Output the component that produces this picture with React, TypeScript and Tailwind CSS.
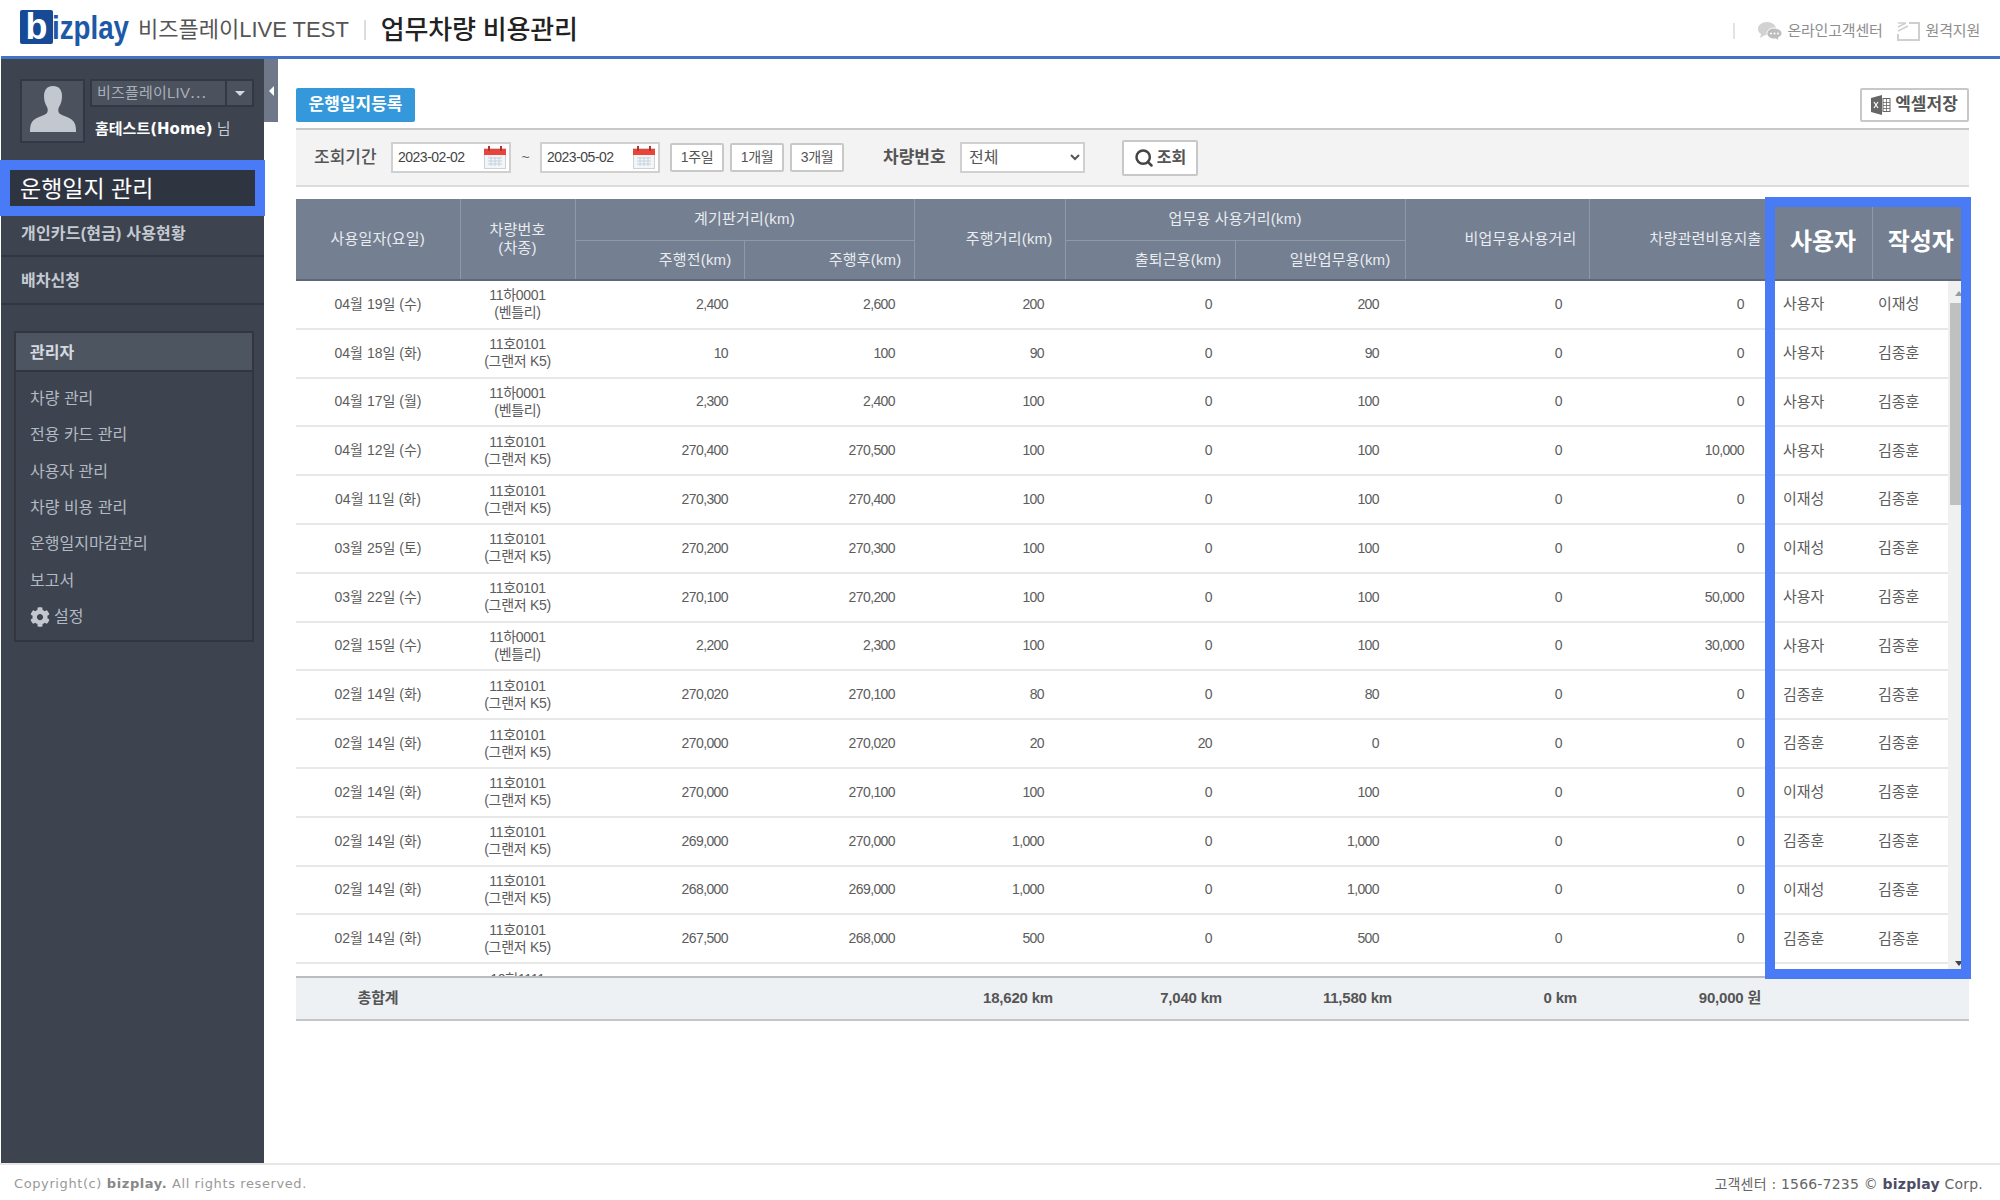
import { FaCog } from 'react-icons/fa';
import { Search } from 'lucide-react';

const GRID = 'grid grid-cols-[164px_115px_169px_170px_151px_170px_170px_184px_185px_98px_76px]';

const BENTLEY = ['11하0001', '(벤틀리)'];
const K5 = ['11호0101', '(그랜저 K5)'];

const rows = [
  { date: '04월 19일 (수)', car: BENTLEY, v: ['2,400', '2,600', '200', '0', '200', '0', '0'], user: '사용자', writer: '이재성' },
  { date: '04월 18일 (화)', car: K5, v: ['10', '100', '90', '0', '90', '0', '0'], user: '사용자', writer: '김종훈' },
  { date: '04월 17일 (월)', car: BENTLEY, v: ['2,300', '2,400', '100', '0', '100', '0', '0'], user: '사용자', writer: '김종훈' },
  { date: '04월 12일 (수)', car: K5, v: ['270,400', '270,500', '100', '0', '100', '0', '10,000'], user: '사용자', writer: '김종훈' },
  { date: '04월 11일 (화)', car: K5, v: ['270,300', '270,400', '100', '0', '100', '0', '0'], user: '이재성', writer: '김종훈' },
  { date: '03월 25일 (토)', car: K5, v: ['270,200', '270,300', '100', '0', '100', '0', '0'], user: '이재성', writer: '김종훈' },
  { date: '03월 22일 (수)', car: K5, v: ['270,100', '270,200', '100', '0', '100', '0', '50,000'], user: '사용자', writer: '김종훈' },
  { date: '02월 15일 (수)', car: BENTLEY, v: ['2,200', '2,300', '100', '0', '100', '0', '30,000'], user: '사용자', writer: '김종훈' },
  { date: '02월 14일 (화)', car: K5, v: ['270,020', '270,100', '80', '0', '80', '0', '0'], user: '김종훈', writer: '김종훈' },
  { date: '02월 14일 (화)', car: K5, v: ['270,000', '270,020', '20', '20', '0', '0', '0'], user: '김종훈', writer: '김종훈' },
  { date: '02월 14일 (화)', car: K5, v: ['270,000', '270,100', '100', '0', '100', '0', '0'], user: '이재성', writer: '김종훈' },
  { date: '02월 14일 (화)', car: K5, v: ['269,000', '270,000', '1,000', '0', '1,000', '0', '0'], user: '김종훈', writer: '김종훈' },
  { date: '02월 14일 (화)', car: K5, v: ['268,000', '269,000', '1,000', '0', '1,000', '0', '0'], user: '이재성', writer: '김종훈' },
  { date: '02월 14일 (화)', car: K5, v: ['267,500', '268,000', '500', '0', '500', '0', '0'], user: '김종훈', writer: '김종훈' },
  { date: '', car: ['10허1111', '\u00a0'], v: ['', '', '', '', '', '', ''], user: '', writer: '' },
];

// right padding of the seven number columns
const numPad = ['pr-[16px]', 'pr-[19px]', 'pr-[21px]', 'pr-[23px]', 'pr-[26px]', 'pr-[27px]', 'pr-[30px]'];

const adminMenu = ['차량 관리', '전용 카드 관리', '사용자 관리', '차량 비용 관리', '운행일지마감관리', '보고서'];

function CalendarIcon() {
  return (
    <svg width="22" height="23" viewBox="0 0 22 23" className="shrink-0">
      <rect x="0.5" y="2.5" width="21" height="20" fill="#f4f5f7" stroke="#cfd3d8" />
      <rect x="0" y="3" width="22" height="6" fill="#e8443a" />
      <rect x="4" y="0" width="2" height="5" fill="#b5322a" />
      <rect x="16" y="0" width="2" height="5" fill="#b5322a" />
      <path d="M4 12h14M4 15h14M4 18h14M7 11v9M11 11v9M15 11v9" stroke="#c3d2de" fill="none" />
    </svg>
  );
}

function DateBox({ value }: { value: string }) {
  return (
    <div className="flex h-[31px] w-[120px] items-center justify-between border-2 border-[#d0d0d0] bg-white pl-[5px] pr-[3px]">
      <span className="text-[14px] tracking-[-0.5px] text-[#444]">{value}</span>
      <CalendarIcon />
    </div>
  );
}

function RangeButton({ label }: { label: string }) {
  return (
    <button className="flex h-[29px] w-[54px] items-center justify-center rounded-[2px] border-2 border-[#c8c8c8] bg-white text-[14px] tracking-[-0.3px] text-[#555]">
      {label}
    </button>
  );
}

function Logo() {
  return (
    <div className="flex h-[36px] w-[111px] items-start">
      <div className="flex h-[34px] w-[33px] shrink-0 items-center justify-center rounded-[2px] bg-[#164a96] text-[36px] font-bold leading-[34px] text-white">
        b
      </div>
      <span className="-ml-[1px] origin-left scale-x-[0.84] whitespace-nowrap text-[33px] font-bold leading-[36px] text-[#1c5aa8]">
        izplay
      </span>
    </div>
  );
}

function Avatar() {
  return (
    <svg width="50" height="50" viewBox="0 0 50 50">
      <path
        d="M25 2c-6 0-9 4-9 10 0 4 1 8 3 11 1 2 1 4 0 6-2 3-14 4-16 11-1 3-1 6-1 8h46c0-2 0-5-1-8-2-7-14-8-16-11-1-2-1-4 0-6 2-3 3-7 3-11 0-6-3-10-9-10z"
        fill="#c3c8d0"
      />
    </svg>
  );
}

function ChatIcon() {
  return (
    <svg width="24" height="20" viewBox="0 0 24 20">
      <path d="M9 1C4 1 0 4 0 8c0 2 1 4 3 5l-1 4 5-3h2c5 0 9-3 9-6.500S14 1 9 1z" fill="#d2d2d2" />
      <path d="M16 7c-4 0-7 2.500-7 5.500S12 18 16 18h2l3 2-.5-3.500c2-1 3.500-2.500 3.500-4C24 9.500 20 7 16 7z" fill="#bdbdbd" stroke="#fff" />
      <circle cx="13" cy="12.500" r="1" fill="#fff" />
      <circle cx="16.500" cy="12.500" r="1" fill="#fff" />
      <circle cx="20" cy="12.500" r="1" fill="#fff" />
    </svg>
  );
}

function RemoteIcon() {
  return (
    <svg width="23" height="20" viewBox="0 0 23 20" fill="none" stroke="#cfcfcf" strokeWidth="2">
      <path d="M12 2h10v17H1v-6" />
      <path d="M1 2h8M1 6l8-4M1 10l10-5" strokeWidth="1.500" />
    </svg>
  );
}

function ExcelIcon() {
  return (
    <svg width="20" height="20" viewBox="0 0 20 20">
      <path d="M0 3l11-3v20L0 17z" fill="#666" />
      <path d="M3 7l4 6M7 7l-4 6" stroke="#fff" strokeWidth="1.200" />
      <rect x="12" y="3.500" width="7" height="13" fill="#fff" stroke="#666" />
      <path d="M15.500 4v12M12 7.500h7M12 10.500h7M12 13.500h7" stroke="#666" strokeWidth="0.800" />
    </svg>
  );
}

function TriangleUp() {
  return <div className="h-0 w-0 border-x-[4px] border-b-[5px] border-x-transparent border-b-[#9a9a9a]" />;
}

function TriangleDown() {
  return <div className="h-0 w-0 border-x-[4px] border-t-[5px] border-x-transparent border-t-[#444]" />;
}

function Sidebar() {
  return (
    <aside className="relative ml-px flex w-[263px] shrink-0 flex-col bg-[#3d4450]">
      <button className="absolute left-full top-0 flex h-[63px] w-[14px] items-center justify-center bg-[#6e7888]">
        <span className="h-0 w-0 border-y-[5px] border-r-[5px] border-y-transparent border-r-white" />
      </button>

      <div className="flex h-[101px] shrink-0 gap-[5px] pl-[19px] pt-[20px]">
        <div className="flex h-[64px] w-[65px] items-end justify-center border-2 border-[#333944] bg-[#4b525d] pb-[7px]">
          <Avatar />
        </div>
        <div className="w-[164px]">
          <div className="flex h-[28px] border-2 border-[#333944] bg-[#4b525d]">
            <span className="flex-1 overflow-hidden whitespace-nowrap pl-[5px] text-[15px] leading-[24px] tracking-[0.2px] text-[#a9afb9]">비즈플레이LIV⋯</span>
            <span className="flex w-[27px] items-center justify-center border-l-2 border-[#333944]">
              <span className="h-0 w-0 border-x-[5px] border-t-[5px] border-x-transparent border-t-[#d5d8dd]" />
            </span>
          </div>
          <div className="mt-[11px] whitespace-nowrap pl-[5px] text-[15px] leading-[22px] text-[#c9cdd3]">
            <span className="font-['DejaVu_Sans','Noto_Sans_CJK_KR',sans-serif] text-[15px] font-bold text-white">홈테스트(Home)</span> 님
          </div>
        </div>
      </div>

      <div className="-mx-px flex h-[56px] shrink-0 items-center border-[10px] border-[#4a7bf7] bg-[#2f3441] pl-[10px] pt-[2px] text-[23px] leading-none text-white">
        운행일지 관리
      </div>
      <div className="flex h-[41px] shrink-0 items-start border-b-2 border-[#31363f] pl-[20px] pt-[6px] text-[16px] font-bold leading-[24px] tracking-[0.2px] text-[#c5cad2]">
        개인카드(현금) 사용현황
      </div>
      <div className="flex h-[48px] shrink-0 items-center border-b-2 border-[#31363f] pl-[20px] pt-[1px] text-[16px] font-bold text-[#c5cad2]">
        배차신청
      </div>

      <div className="ml-[13px] mt-[26px] h-[311px] w-[240px] border-2 border-[#31363f]">
        <div className="flex h-[39px] items-center border-b-2 border-[#31363f] bg-[#4d5660] pl-[14px] pt-[2px] text-[16px] font-bold text-[#d6dae0]">
          관리자
        </div>
        <ul className="pl-[14px] pt-[9px] text-[16px] text-[#b4bac3]">
          {adminMenu.map((item) => (
            <li key={item} className="flex h-[36.3px] items-center">
              {item}
            </li>
          ))}
          <li className="flex h-[36.3px] items-center gap-[4px]">
            <FaCog className="h-[20px] w-[20px] text-[#c3c8ce]" />
            설정
          </li>
        </ul>
      </div>
    </aside>
  );
}

function GridHeader() {
  const th = 'border-r border-b border-[#8f99a8] font-normal';
  return (
    <table className="w-[1673px] table-fixed border-b-2 border-[#5d6879] bg-[#747f91] text-[15px] tracking-[0.2px] text-[#e9ecf0]">
      <colgroup>
        <col className="w-[164px]" />
        <col className="w-[115px]" />
        <col className="w-[169px]" />
        <col className="w-[170px]" />
        <col className="w-[151px]" />
        <col className="w-[170px]" />
        <col className="w-[170px]" />
        <col className="w-[184px]" />
        <col className="w-[185px]" />
        <col className="w-[98px]" />
        <col className="w-[97px]" />
      </colgroup>
      <thead>
        <tr className="h-[41px]">
          <th rowSpan={2} className={th}>사용일자(요일)</th>
          <th rowSpan={2} className={`${th} leading-[18px]`}>차량번호<br />(차종)</th>
          <th colSpan={2} className={th}>계기판거리(km)</th>
          <th rowSpan={2} className={`${th} pr-[12px] text-right`}>주행거리(km)</th>
          <th colSpan={2} className={th}>업무용 사용거리(km)</th>
          <th rowSpan={2} className={`${th} pr-[12px] text-right`}>비업무용사용거리</th>
          <th rowSpan={2} className={`${th} whitespace-nowrap pr-[12px] text-right`}>차량관련비용지출</th>
          <th rowSpan={2} className={`${th} pt-[5px] text-[24px] tracking-normal !font-bold text-white`}>사용자</th>
          <th rowSpan={2} className="border-b border-[#8f99a8] pt-[5px] text-[24px] font-bold tracking-normal text-white">작성자</th>
        </tr>
        <tr className="h-[40px]">
          <th className={`${th} pr-[12px] text-right`}>주행전(km)</th>
          <th className={`${th} pr-[12px] text-right`}>주행후(km)</th>
          <th className={`${th} pr-[13px] text-right`}>출퇴근용(km)</th>
          <th className={`${th} pr-[14px] text-right`}>일반업무용(km)</th>
        </tr>
      </thead>
    </table>
  );
}

function GridBody() {
  return (
    <div className="flex h-[695px] overflow-hidden">
      <div className="w-[1652px] shrink-0">
        {rows.map((r, i) => (
          <div key={i} className={`${GRID} h-[48.8px] items-center border-b-2 border-[#e8e8e8] text-[14px] text-[#5c5c5c]`}>
            <div className="text-center">{r.date}</div>
            <div className="text-center leading-[17px] tracking-[-0.3px]">
              {r.car[0]}
              <br />
              {r.car[1]}
            </div>
            {r.v.map((n, j) => (
              <div key={j} className={`text-right tracking-[-0.6px] ${numPad[j]}`}>{n}</div>
            ))}
            <div className="pl-[9px] text-[15px]">{r.user}</div>
            <div className="pl-[6px] text-[15px]">{r.writer}</div>
          </div>
        ))}
      </div>
      <div className="flex w-[21px] shrink-0 flex-col bg-[#f0f0f0]">
        <div className="flex h-[22px] items-center justify-center pt-[3px]">
          <TriangleUp />
        </div>
        <div className="ml-[2px] h-[202px] bg-[#c0c0c0]" />
        <div className="flex flex-1 items-end justify-center pb-[10px]">
          <TriangleDown />
        </div>
      </div>
    </div>
  );
}

function GridTotal() {
  return (
    <div className={`${GRID} h-[45px] w-[1673px] items-center border-y-2 border-t-[#b9bdc1] border-b-[#c4c7ca] bg-[#edf1f4] text-[15px] font-bold tracking-[-0.2px] text-[#555]`}>
      <div className="text-center">총합계</div>
      <div />
      <div />
      <div />
      <div className="pr-[12px] text-right">18,620 km</div>
      <div className="pr-[13px] text-right">7,040 km</div>
      <div className="pr-[13px] text-right">11,580 km</div>
      <div className="pr-[12px] text-right">0 km</div>
      <div className="pr-[13px] text-right">90,000 원</div>
    </div>
  );
}

export default function App() {
  return (
    <div className="flex h-[1200px] w-[2000px] flex-col overflow-hidden bg-white font-['Liberation_Sans','Noto_Sans_CJK_KR',sans-serif]">
      <header className="ml-px flex h-[59px] shrink-0 items-start border-b-[3px] border-[#4472c4] pl-[19px]">
        <div className="mt-[10px]">
          <Logo />
        </div>
        <span className="ml-[7px] mt-[17px] text-[22px] leading-[26px] text-[#555]">비즈플레이LIVE TEST</span>
        <span className="ml-[15px] mt-[20px] h-[20px] w-[2px] bg-[#ddd]" />
        <span className="ml-[15px] mt-[14px] text-[26px] font-medium leading-[32px] tracking-[-0.2px] text-[#222]">업무차량 비용관리</span>
        <div className="ml-auto mr-[20px] mt-[20px] flex items-center text-[15px] tracking-[-0.2px] text-[#8e8e8e]">
          <span className="mr-[23px] h-[16px] w-[2px] bg-[#e2e2e2]" />
          <ChatIcon />
          <span className="ml-[5px]">온라인고객센터</span>
          <span className="ml-[14px]"><RemoteIcon /></span>
          <span className="ml-[6px]">원격지원</span>
        </div>
      </header>

      <div className="flex min-h-0 flex-1">
        <Sidebar />

        <main className="min-w-0 flex-1 pl-[32px] pr-[31px] pt-[29px]">
          <div className="flex h-[34px] items-start justify-between">
            <button className="flex h-[34px] w-[119px] items-center justify-center rounded-[2px] bg-[#3498db] text-[17px] font-bold text-white">
              운행일지등록
            </button>
            <button className="flex h-[34px] w-[109px] items-center justify-center gap-[4px] rounded-[2px] border-2 border-[#c8c8c8] bg-white text-[17px] font-bold text-[#555]">
              <ExcelIcon />
              엑셀저장
            </button>
          </div>

          <div className="mt-[6px] flex h-[59px] items-center border-y-2 border-t-[#c9c9c9] border-b-[#dcdcdc] bg-[#f3f3f3] pl-[18px]">
            <span className="w-[77px] text-[17px] font-medium text-[#555]">조회기간</span>
            <DateBox value="2023-02-02" />
            <span className="w-[29px] text-center text-[14px] text-[#666]">~</span>
            <DateBox value="2023-05-02" />
            <div className="ml-[10px] flex gap-[6px]">
              <RangeButton label="1주일" />
              <RangeButton label="1개월" />
              <RangeButton label="3개월" />
            </div>
            <span className="ml-[39px] w-[77px] text-[17px] font-bold text-[#555]">차량번호</span>
            <select defaultValue="전체" className="h-[31px] w-[125px] border-2 border-[#d0d0d0] bg-white pl-[3px] text-[16px] text-[#555]">
              <option>전체</option>
            </select>
            <button className="ml-[37px] flex h-[36px] w-[76px] items-center justify-center gap-[3px] rounded-[2px] border-2 border-[#c8c8c8] bg-white text-[16px] font-bold text-[#555]">
              <Search className="h-[20px] w-[20px] text-[#444]" strokeWidth={3} />
              조회
            </button>
          </div>

          <div className="relative mt-[12px] w-[1673px]">
            <GridHeader />
            <GridBody />
            <GridTotal />
            <div className="pointer-events-none absolute -top-[2px] left-[1469px] h-[782px] w-[206px] border-[10px] border-[#4a7bf7]" />
          </div>
        </main>
      </div>

      <footer className="flex h-[37px] shrink-0 items-start justify-between border-t-2 border-[#e6e6e6] pl-[14px] pr-[17px] pt-[9px] font-['DejaVu_Sans','Noto_Sans_CJK_KR',sans-serif] leading-[20px]">
        <span className="text-[13px] tracking-[0.6px] text-[#999]">
          Copyright(c) <b className="text-[#888]">bizplay.</b> All rights reserved.
        </span>
        <span className="text-[14px] tracking-[0.2px] text-[#666]">
          고객센터 : 1566-7235 © <b className="text-[#4d4d66]">bizplay</b> Corp.
        </span>
      </footer>
    </div>
  );
}
